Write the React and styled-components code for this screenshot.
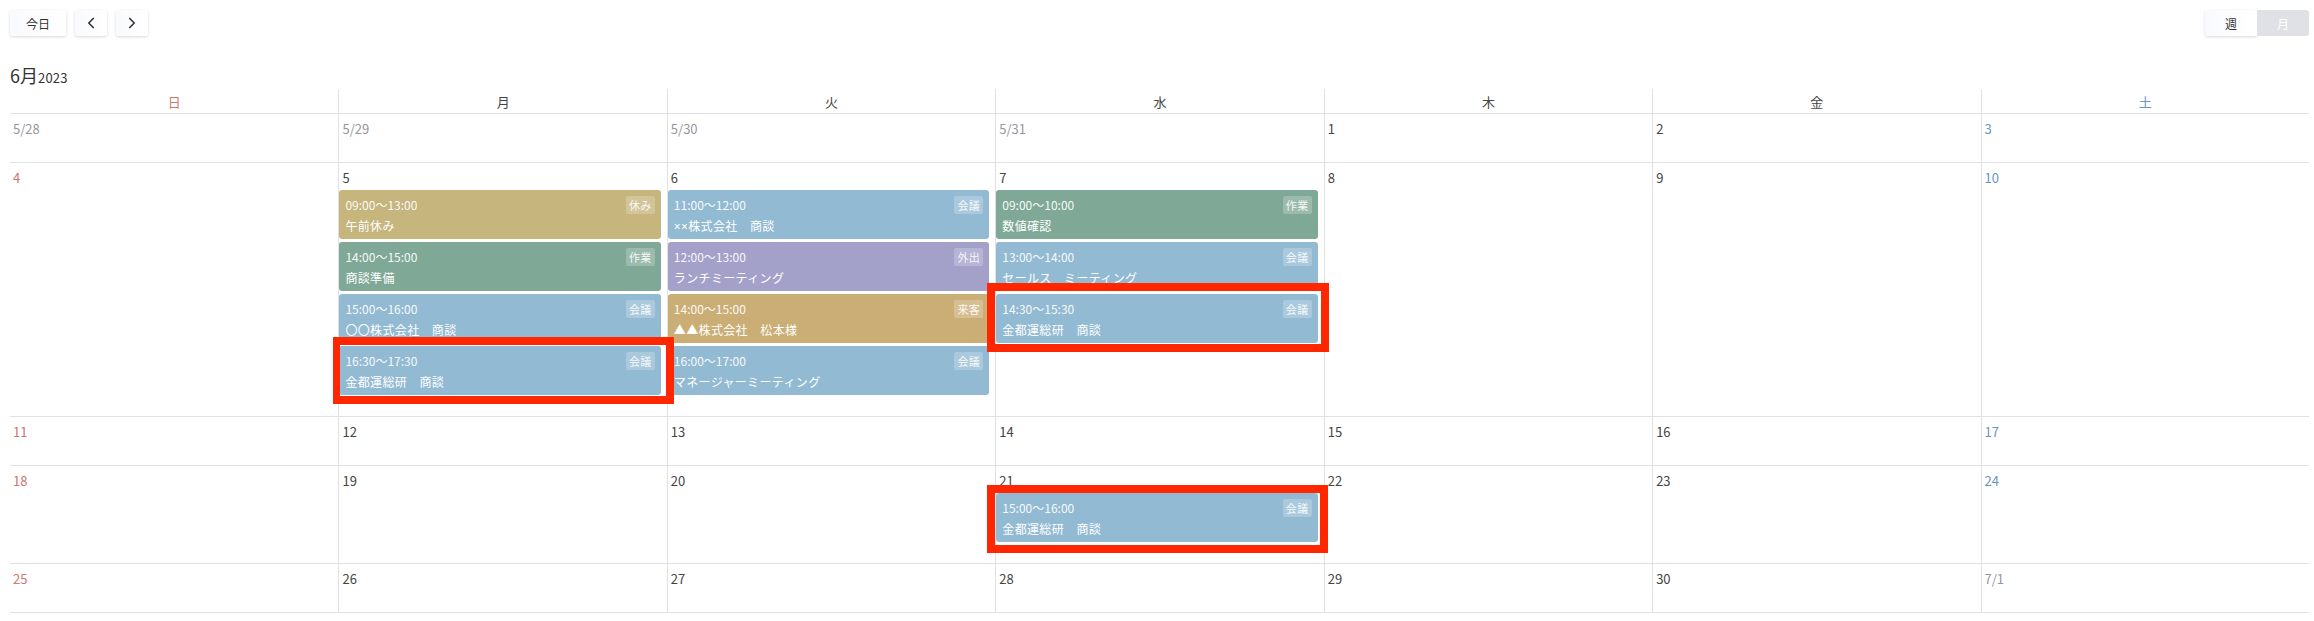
import React from "react";
import styled, { createGlobalStyle } from "styled-components";
import { ChevronLeft, ChevronRight } from "lucide-react";

const Global = createGlobalStyle`
  * { box-sizing: border-box; }
  html, body { margin: 0; background: #fff; }
  body {
    font-family: "Noto Sans CJK JP", "Noto Sans", sans-serif;
    color: #444;
  }
`;

const COLORS = {
  rest: "#c6b57d",
  work: "#7fa996",
  meeting: "#93bad3",
  out: "#a3a1c9",
  visit: "#cbae76",
};

const BOX_A = { top: 9, right: 13, bottom: 9, left: 6, leftEdge: 7 };
const BOX_B = { top: 11, right: 11, bottom: 9, left: 9, leftEdge: 8 };
const BOX_C = { top: 8, right: 10, bottom: 11, left: 9, leftEdge: 8 };

const WEEKDAYS = ["日", "月", "火", "水", "木", "金", "土"];

const WEEKS = [
  [
    { label: "5/28", muted: true },
    { label: "5/29", muted: true },
    { label: "5/30", muted: true },
    { label: "5/31", muted: true },
    { label: "1" },
    { label: "2" },
    { label: "3" },
  ],
  [
    { label: "4" },
    {
      label: "5",
      events: [
        { time: "09:00〜13:00", title: "午前休み", tag: "休み", kind: "rest" },
        { time: "14:00〜15:00", title: "商談準備", tag: "作業", kind: "work" },
        { time: "15:00〜16:00", title: "〇〇株式会社　商談", tag: "会議", kind: "meeting" },
        { time: "16:30〜17:30", title: "金都運総研　商談", tag: "会議", kind: "meeting", box: BOX_A },
      ],
    },
    {
      label: "6",
      events: [
        { time: "11:00〜12:00", title: "××株式会社　商談", tag: "会議", kind: "meeting" },
        { time: "12:00〜13:00", title: "ランチミーティング", tag: "外出", kind: "out" },
        { time: "14:00〜15:00", title: "▲▲株式会社　松本様", tag: "来客", kind: "visit" },
        { time: "16:00〜17:00", title: "マネージャーミーティング", tag: "会議", kind: "meeting" },
      ],
    },
    {
      label: "7",
      events: [
        { time: "09:00〜10:00", title: "数値確認", tag: "作業", kind: "work" },
        { time: "13:00〜14:00", title: "セールス　ミーティング", tag: "会議", kind: "meeting" },
        { time: "14:30〜15:30", title: "金都運総研　商談", tag: "会議", kind: "meeting", box: BOX_B },
      ],
    },
    { label: "8" },
    { label: "9" },
    { label: "10" },
  ],
  [
    { label: "11" },
    { label: "12" },
    { label: "13" },
    { label: "14" },
    { label: "15" },
    { label: "16" },
    { label: "17" },
  ],
  [
    { label: "18" },
    { label: "19" },
    { label: "20" },
    {
      label: "21",
      events: [
        { time: "15:00〜16:00", title: "金都運総研　商談", tag: "会議", kind: "meeting", box: BOX_C },
      ],
    },
    { label: "22" },
    { label: "23" },
    { label: "24" },
  ],
  [
    { label: "25" },
    { label: "26" },
    { label: "27" },
    { label: "28" },
    { label: "29" },
    { label: "30" },
    { label: "7/1", muted: true },
  ],
];

function dayColor(index, muted) {
  if (muted) return "#96969c";
  if (index === 0) return "#d0756e";
  if (index === 6) return "#6b93c0";
  return "#444";
}

export default function App() {
  return (
    <Page>
      <Global />
      <Toolbar>
        <Group>
          <TodayButton>今日</TodayButton>
          <IconButton><ChevronLeft size={18} strokeWidth={2.2} /></IconButton>
          <IconButton><ChevronRight size={18} strokeWidth={2.2} /></IconButton>
        </Group>
        <Toggle>
          <ToggleButton>週</ToggleButton>
          <ToggleButton $active>月</ToggleButton>
        </Toggle>
      </Toolbar>

      <MonthTitle>6月<small>2023</small></MonthTitle>

      <WeekHeader>
        {WEEKDAYS.map((d, i) => (
          <WeekdayCell key={d} $color={dayColor(i)}>{d}</WeekdayCell>
        ))}
      </WeekHeader>

      {WEEKS.map((week, w) => (
        <WeekRow key={w}>
          {week.map((day, i) => (
            <DayCell key={day.label}>
              <DayNumber $color={dayColor(i, day.muted)}>{day.label}</DayNumber>
              {(day.events || []).map((ev) => (
                <EventCard key={ev.time} $kind={ev.kind} $box={ev.box}>
                  <EventTime>{ev.time}</EventTime>
                  <EventTitle>{ev.title}</EventTitle>
                  <EventTag>{ev.tag}</EventTag>
                </EventCard>
              ))}
            </DayCell>
          ))}
        </WeekRow>
      ))}
    </Page>
  );
}

const Page = styled.div`
  width: 2314px;
  padding: 10px 5px 0 10px;
`;

const Toolbar = styled.div`
  display: flex;
  justify-content: space-between;
  align-items: center;
  height: 26px;
`;

const Group = styled.div`
  display: flex;
  gap: 9px;
`;

const BaseButton = styled.button`
  display: flex;
  align-items: center;
  justify-content: center;
  height: 26px;
  padding: 0;
  border: 0;
  border-radius: 3px;
  background: linear-gradient(90deg, #f9fafd, #fff);
  box-shadow: 0 1px 3px rgba(60, 60, 80, 0.2);
  color: #333;
  font-family: inherit;
  font-size: 12px;
`;

const TodayButton = styled(BaseButton)`
  width: 56px;
`;

const IconButton = styled(BaseButton)`
  width: 32px;
`;

const Toggle = styled.div`
  display: flex;
`;

const ToggleButton = styled(BaseButton)`
  width: 52px;
  background: ${(p) => (p.$active ? "#e0e1e6" : "linear-gradient(90deg, #f9fafd, #fff)")};
  box-shadow: ${(p) => (p.$active ? "none" : "0 1px 3px rgba(60, 60, 80, 0.2)")};
  color: ${(p) => (p.$active ? "#fff" : "#333")};
  border-radius: ${(p) => (p.$active ? "0 3px 3px 0" : "3px 0 0 3px")};
`;

const MonthTitle = styled.h1`
  display: flex;
  align-items: baseline;
  height: 53px;
  margin: 0;
  padding-top: 26px;
  font-size: 18px;
  line-height: 26px;
  font-weight: 400;
  color: #333;

  small {
    font-size: 13px;
    letter-spacing: 0.2px;
  }
`;

const WeekHeader = styled.div`
  display: grid;
  grid-template-columns: repeat(7, 1fr);
  height: 25px;
  border-bottom: 1px solid #e0e0e6;
`;

const WeekdayCell = styled.div`
  display: flex;
  align-items: center;
  justify-content: center;
  border-left: 1px solid #e0e0e6;
  font-size: 13px;
  color: ${(p) => p.$color};

  &:first-child {
    border-left: 0;
  }
`;

const WeekRow = styled.div`
  display: grid;
  grid-template-columns: repeat(7, 1fr);
  min-height: 49px;
  border-bottom: 1px solid #e0e0e6;
`;

const DayCell = styled.div`
  min-width: 0;
  padding-bottom: 18px;
  border-left: 1px solid #e0e0e6;

  &:first-child {
    border-left: 0;
  }
`;

const DayNumber = styled.div`
  height: 27px;
  padding: 2px 0 0 3px;
  font-size: 13px;
  line-height: 25px;
  color: ${(p) => p.$color};
`;

const EventCard = styled.div`
  position: relative;
  height: 49px;
  margin: 0 6px 3px 0;
  padding: 6px;
  border-radius: 3px;
  background: ${(p) => COLORS[p.$kind]};
  color: #fff;

  ${(p) =>
    p.$box &&
    `
    &::after {
      content: "";
      position: absolute;
      top: -${p.$box.top}px;
      right: -${p.$box.right}px;
      bottom: -${p.$box.bottom}px;
      left: -${p.$box.left}px;
      border: 8px solid #ff2600;
      border-left-width: ${p.$box.leftEdge}px;
      z-index: 2;
    }
  `}
`;

const EventTime = styled.div`
  font-size: 12px;
  line-height: 18px;
  opacity: 0.92;
`;

const EventTitle = styled.div`
  margin-top: 4px;
  font-family: "Noto Sans", "Noto Sans CJK JP", sans-serif;
  font-size: 12px;
  line-height: 18px;
  letter-spacing: 0.35px;
`;

const EventTag = styled.span`
  position: absolute;
  top: 6px;
  right: 6px;
  width: 29px;
  height: 18px;
  border-radius: 2px;
  background: rgba(255, 255, 255, 0.22);
  color: rgba(255, 255, 255, 0.9);
  font-size: 11px;
  line-height: 18px;
  letter-spacing: 0.4px;
  text-align: center;
`;
